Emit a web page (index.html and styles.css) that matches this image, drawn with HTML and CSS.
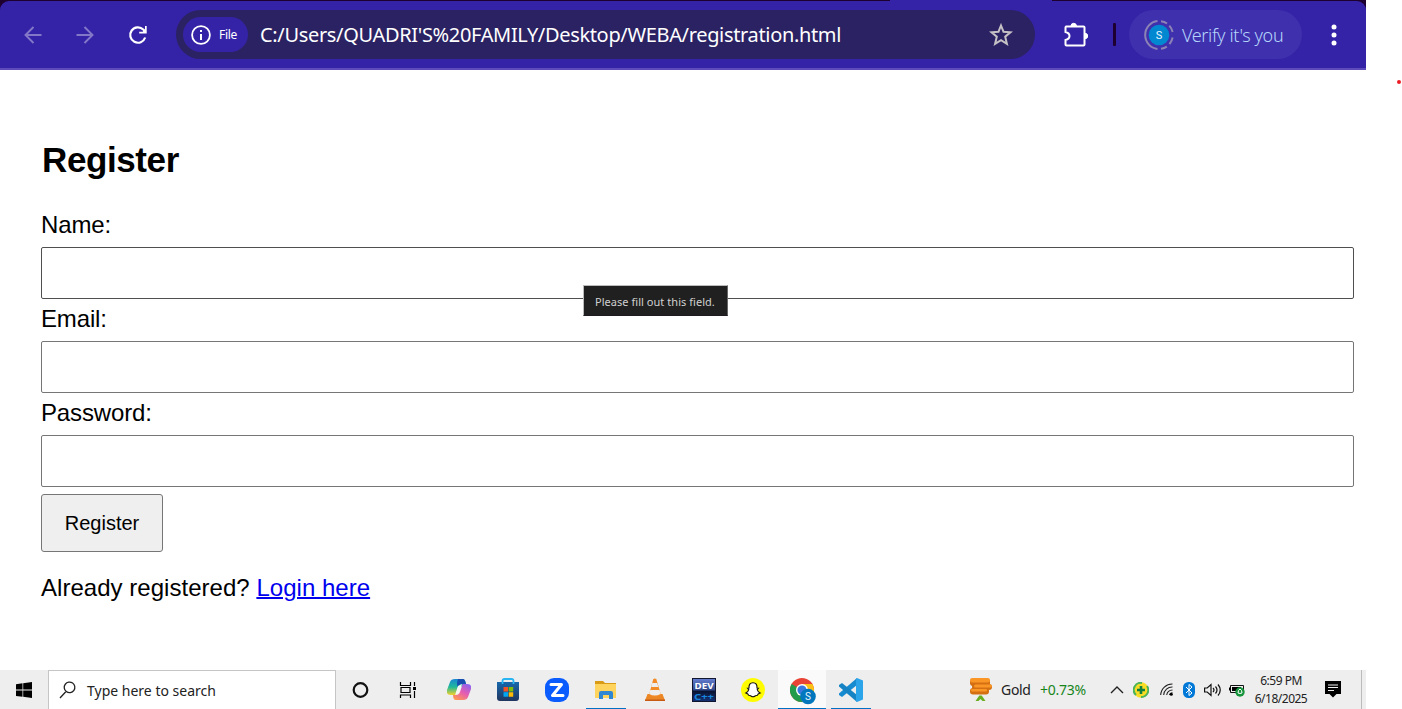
FILE: index.html
```html
<!DOCTYPE html>
<html lang="en">
<head>
<meta charset="utf-8">
<title>Register</title>
<link rel="stylesheet" href="styles.css">
</head>
<body>
<div class="screen">
  <header class="browser">
    <div class="toolbar">
      <svg class="nav back" width="18" height="18" viewBox="0 0 18 18"><path d="M17.5 9H1.5M9.5 1L1.5 9l8 8"/></svg>
      <svg class="nav forward" width="18" height="18" viewBox="0 0 18 18"><path d="M.5 9h16M8.500 1l8 8-8 8"/></svg>
      <svg class="reload" width="20" height="20" viewBox="0 0 20 20"><path d="M17.200 12.500A7.700 7.700 0 1 1 15.300 4.500L17.500 7" fill="none" stroke="#fff" stroke-width="2.200"/><path d="M18.700 1v7.500h-7.500v-1.800h3.500L17 4V1z" fill="#fff"/></svg>
      <div class="address">
        <div class="chip">
          <svg width="20" height="20" viewBox="0 0 20 20"><circle cx="10" cy="10" r="8.900" fill="none" stroke="#fff" stroke-width="1.800"/><path d="M10 9v6M10 5v2" stroke="#fff" stroke-width="2"/></svg>
          <span class="chip-text">File</span>
        </div>
        <span class="url">C:/Users/QUADRI'S%20FAMILY/Desktop/WEBA/registration.html</span>
        <svg class="star" width="24" height="24" viewBox="0 0 24 24"><path d="M12 2.500l2.500 6.200 7 .5-5.300 4.500 1.700 7.100-5.900-3.700-5.900 3.700 1.700-7.100-5.300-4.500 7-.5z" fill="none" stroke="#c5c1c5" stroke-width="2"/></svg>
      </div>
      <svg class="puzzle" width="26" height="26" viewBox="0 0 26 26"><path d="M3.500 4.500h18q1 0 1 1v17q0 1-1 1h-17q-1 0-1-1v-4.500q4-1 4-4t-4-4V5.500q0-1 1-1z" fill="none" stroke="#fff" stroke-width="2"/><path d="M9 4a2.700 2.700 0 0 1 5.400 0zM23 11.300a2.700 2.700 0 0 1 0 5.400z" fill="#fff" stroke="#fff"/></svg>
      <span class="divider"></span>
      <div class="profile">
        <svg width="30" height="30" viewBox="0 0 30 30"><g fill="none" stroke="#8b83b6" stroke-width="2"><path d="M13.500 1.100A14 14 0 0 0 13.500 28.900M17 1.200Q20.500 1.500 23 3.500M25.300 5.600Q28 8.500 28.600 12M28.600 17.500Q28 21 25.500 24.200M22.800 26.600Q20.500 28.300 17 28.800"/></g><circle cx="15" cy="15" r="10.300" fill="#0288d1"/><text x="15" y="18.800" text-anchor="middle" class="avatar">S</text></svg>
        <span class="verify">Verify it's you</span>
      </div>
      <svg class="dots" width="6" height="22" viewBox="0 0 6 22"><g fill="#fff"><circle cx="3" cy="3" r="2.500"/><circle cx="3" cy="11" r="2.500"/><circle cx="3" cy="19" r="2.500"/></g></svg>
    </div>
    <span class="tab-foot"></span>
  </header>

  <main class="page">
    <h2 class="title">Register</h2>
    <form class="form">
      <label class="label" for="name">Name:</label>
      <input class="field active" id="name" type="text">
      <label class="label" for="email">Email:</label>
      <input class="field" id="email" type="email">
      <label class="label" for="password">Password:</label>
      <input class="field" id="password" type="password">
      <button class="submit" type="button"><span class="submit-text">Register</span></button>
    </form>
    <p class="login">Already registered? <a class="link" href="#">Login here</a></p>
    <div class="tooltip"><span class="tooltip-text">Please fill out this field.</span></div>
  </main>

  <footer class="taskbar">
    <div class="start"><svg width="16" height="16" viewBox="0 0 16 16"><path d="M0 2.200l6.500-.9v6.300H0zM7.200 1.200L16 0v7.600H7.200zM0 8.500h6.500v6.300L0 14zM7.200 8.500H16V16l-8.800-1.200z"/></svg></div>
    <div class="search">
      <svg width="18" height="18" viewBox="0 0 18 18"><path d="M1 17l6-6.500M7.300 10.600a5.300 5.300 0 1 1 7.600-1.200 5.300 5.300 0 0 1-7.600 1.200z" fill="none" stroke="#222" stroke-width="1.300"/></svg>
      <span class="search-text">Type here to search</span>
    </div>
    <div class="apps">
      <div class="app"><svg width="18" height="18" viewBox="0 0 18 18"><circle cx="8.500" cy="9" r="6.800" fill="none" stroke="#111" stroke-width="2.200"/></svg></div>
      <div class="app"><svg class="taskview" width="18" height="16" viewBox="0 0 18 16"><path d="M1.500 0v3.500h10V0M1.500 16v-3h10v3M2 5.500h9v5H2zM15.500 0v4M15.500 9v7" fill="none" stroke="#000" stroke-width="1.200"/><path d="M14 5h3v3h-3z"/></svg></div>
      <div class="app"><svg width="24" height="24" viewBox="0 0 24 24">
        <defs><linearGradient id="coolCo" x2="0" y2="1"><stop stop-color="#1987d3"/><stop offset=".5" stop-color="#21b999"/><stop offset="1" stop-color="#f3d22b"/></linearGradient><linearGradient id="warmCo" x1=".8" x2=".2" y2="1"><stop stop-color="#8d63ed"/><stop offset=".5" stop-color="#e65cb1"/><stop offset="1" stop-color="#ff9950"/></linearGradient></defs>
        <path d="M8 1h8q2 0 3 5l-2 2-6 1-2 8H4q-5 0-4-5L3 4q1-3 5-3z" fill="url(#coolCo)"/><path d="M11 1h5q2 0 3 5h-4q-3 0-4 3-2-2 0-8z" fill="#174eaf"/><path d="M16 6h4q5 0 4 5l-3 8q-1 3-5 3H9q-3 0-3-5h3q3 0 4-3l2-6q0-2 1-2z" fill="url(#warmCo)"/><path d="M11 8l4-2-3 9-4 2z" fill="#f8f7f4"/></svg></div>
      <div class="app"><svg width="24" height="24" viewBox="0 0 24 24"><defs><linearGradient id="shop" x2="0" y2="1"><stop stop-color="#1668ad"/><stop offset="1" stop-color="#20365f"/></linearGradient></defs><path d="M1 4h22v16q0 3-3 3H4q-3 0-3-3z" fill="url(#shop)"/><path d="M6.500 6V3q0-2 2-2h7q2 0 2 2v3" fill="none" stroke="#29b5f1" stroke-width="1.800"/><path d="M7.500 9H12v4.500H7.500z" fill="#f35325"/><path d="M12.700 9h4.500v4.500h-4.500z" fill="#81bc06"/><path d="M7.500 14.200H12v4.500H7.500z" fill="#05a6f0"/><path d="M12.700 14.200h4.500v4.500h-4.500z" fill="#ffba08"/></svg></div>
      <div class="app"><svg width="24" height="24" viewBox="0 0 24 24"><rect width="24" height="24" rx="9" fill="#0b5cff"/><path d="M6 6.500h10.500L7.500 17.500H18" fill="none" stroke="#fff" stroke-width="3" stroke-linecap="round" stroke-linejoin="round"/></svg></div>
      <div class="app running"><svg width="22" height="20" viewBox="0 0 22 20"><path d="M0 1h8l2 2h11v6H0z" fill="#d99b16"/><path d="M0 4h21v14H0z" fill="#ffd45e"/><path d="M4 19v-6q0-2 2-2h10q2 0 2 2v6h-4v-4H8v4z" fill="#2f86d2"/></svg></div>
      <div class="app"><svg width="22" height="24" viewBox="0 0 22 24"><path d="M3.500 16h15l2.500 6.500H1z" fill="#ec8725"/><path d="M9.300 1q1.700-1 3 0l4.700 16q-6 4-12 0z" fill="#f28a25"/><path d="M8.300 5h4.900l1.100 4H7.200zM6.300 12h9.200l1.200 4q-6 3-11.500 0z" fill="#eee"/><path d="M1 21.500h20v1.500H1z" fill="#c85b14"/></svg></div>
      <div class="app"><svg width="24" height="24" viewBox="0 0 24 24"><defs><linearGradient id="dev" x2="0" y2="1"><stop stop-color="#657ed0"/><stop offset=".5" stop-color="#31498a"/><stop offset=".55" stop-color="#091331"/><stop offset="1" stop-color="#153376"/></linearGradient></defs><rect x=".5" y=".5" width="23" height="23" fill="url(#dev)" stroke="#111731"/><text x="12" y="11" text-anchor="middle" class="dev-text" textLength="19" lengthAdjust="spacingAndGlyphs">DEV</text><text x="12" y="22" text-anchor="middle" class="cpp-text" textLength="20" lengthAdjust="spacingAndGlyphs">C++</text></svg></div>
      <div class="app"><svg width="24" height="24" viewBox="0 0 24 24"><circle cx="12" cy="12" r="12" fill="#fffc00"/><path d="M12 4.700c-3 0-4.200 2-4 5.300l-1.500.2 1.300 1.500c-.5 1.700-1.500 2.500-3 3.200l2 1 .8 1.300c2-.2 2.500 1.500 4.400 1.500s2.400-1.700 4.400-1.500l.8-1.300 2-1c-1.500-.7-2.500-1.500-3-3.200l1.300-1.500L16 10c.2-3.300-1-5.300-4-5.300z" fill="#fff" stroke="#111" stroke-width="1.100"/></svg></div>
      <div class="app current"><svg class="chrome" width="26" height="27" viewBox="0 0 26 27"><circle cx="12" cy="12" r="12" fill="#e94335"/><path d="M12 12L1.600 6A12 12 0 0 0 12 24l6-10z" fill="#249b4a"/><path d="M12 6h10.400A12 12 0 0 1 12 24l5-9z" fill="#fbc116"/><circle cx="12" cy="12" r="6" fill="#fff"/><circle cx="12" cy="12" r="4.600" fill="#3979df"/><circle cx="18" cy="18.500" r="7.800" fill="#0277bd"/><text x="18" y="22" text-anchor="middle" class="mini-avatar">S</text></svg></div>
      <div class="app running"><svg width="24" height="24" viewBox="0 0 24 24"><path d="M18 0v7L3 19l-3-2V15.500z" fill="#168bd0"/><path d="M3 5L0 7v1.500L18 24v-7z" fill="#1683c5"/><path d="M18 0l6 2.500v19L18 24l-1-1V1z" fill="#2ca4ea"/></svg></div>
    </div>
    <div class="tray">
      <svg class="gold" width="24" height="24" viewBox="0 0 24 24"><g fill="#d46f12"><rect x="1" y="1" width="20" height="7" rx="3"/><rect x="3" y="6" width="20" height="6" rx="3"/><rect x="1" y="10" width="19" height="6.500" rx="3"/></g><g fill="#fa9626"><rect x="1" y="0" width="20" height="4.500" rx="2.200"/><rect x="5" y="6.500" width="18" height="3" rx="1.500"/><rect x="2" y="11" width="16" height="2.500" rx="1.200"/></g><path d="M6.500 23l3.800-5.500h2.400l3.800 5.500h-3l-2-2-2 2z" fill="#69ad20"/></svg>
      <span class="gold-text">Gold</span>
      <span class="change">+0.73%</span>
      <svg class="chevron" width="14" height="8" viewBox="0 0 14 8"><path d="M1 7l6-6 6 6" fill="none" stroke="#222" stroke-width="1.400"/></svg>
      <svg class="update" width="16" height="16" viewBox="0 0 16 16"><circle cx="8" cy="8" r="7.700" fill="#f9dc24"/><path d="M3 13A7 7 0 0 1 9 1M14 4a7 7 0 0 1-6 11" fill="none" stroke="#4bb45b" stroke-width="2"/><path d="M8 4v8M4 8h8" stroke="#12803d" stroke-width="2.600"/></svg>
      <svg class="wifi" width="13" height="13" viewBox="0 0 13 13"><g fill="none" stroke="#222" stroke-width="1.100"><path d="M.7 12A11.500 11.500 0 0 1 12.500 1M3.700 12A8.500 8.500 0 0 1 12.500 4M6.700 12a6 6 0 0 1 5.800-5M9.500 12a3 3 0 0 1 3-2.300"/></g><circle cx="11.300" cy="11.300" r="1.500"/></svg>
      <svg class="bluetooth" width="12" height="16" viewBox="0 0 12 16"><rect width="12" height="16" rx="5.500" fill="#0078d7"/><path d="M3 5l6 6-3 2.500v-11L9 5l-6 6" fill="none" stroke="#fff"/></svg>
      <svg class="volume" width="18" height="14" viewBox="0 0 18 14"><path d="M.6 5h2.600L7 1.500v11L3.200 9H.6zM9 5q2 2 0 4M11.500 3.500q3 3.500 0 7M14 1.500q4.500 5.500 0 11" fill="none" stroke="#111" stroke-width="1.200"/></svg>
      <svg class="battery" width="16" height="14" viewBox="0 0 16 14"><path d="M1.500 2.500h13v7h-13z" fill="none" stroke="#111"/><path d="M3 4h9v4H3zM0 4.500h1.500v3H0z"/><circle cx="11" cy="9" r="4.700" fill="#16943c"/><path d="M9 10q0-3 2-4 2 1 2 4-2 1-4 0z" fill="none" stroke="#fff"/></svg>
      <div class="clock"><span class="time">6:59 PM</span><span class="date">6/18/2025</span></div>
      <svg class="notice" width="16" height="17" viewBox="0 0 16 17"><path d="M0 0h16v13h-4.500L8 16.500 4.500 13H0z"/><path d="M3 4h10M3 6.500h10M3 9.500h6" stroke="#eee"/></svg>
    </div>
  </footer>
</div>
<span class="red-dot"></span>
</body>
</html>
```
FILE: styles.css
```css
* { box-sizing: border-box; }
body { margin: 0; background: #fff; overflow: hidden; position: relative; height: 709px; }
svg { display: block; flex: none; }
span { white-space: nowrap; }
.screen { width: 1366px; height: 709px; display: flex; flex-direction: column; }

.browser { position: relative; height: 70px; padding-top: 1px; background: #1d0030; font-family: "Noto Sans", sans-serif; }
.toolbar { height: 69px; display: flex; align-items: center; background: #3523a7; border-bottom: 2px solid #5d4cba; border-radius: 9px 9px 0 0; padding-left: 24px; }
.tab-foot { position: absolute; left: 890px; top: 0; width: 162px; height: 1px; background: #3523a7; }
.nav { fill: none; stroke: #8378c8; stroke-width: 1.900; }
.forward { margin-left: 34px; }
.reload { margin-left: 34px; }
.address { display: flex; align-items: center; width: 859px; height: 49px; margin-left: 28px; padding-left: 7px; border-radius: 25px; background: #2b2263; }
.chip { width: 65px; height: 35px; display: flex; align-items: center; padding-left: 8px; border-radius: 18px; background: #3523a7; color: #fff; }
.chip-text { margin-left: 8px; font-size: 12px; letter-spacing: -0.3px; }
.url { width: 582px; margin-left: 12px; color: #fff; font-size: 20px; letter-spacing: -0.34px; }
.star { margin-left: 147px; }
.puzzle { margin-left: 27px; }
.divider { width: 3px; height: 23px; margin-left: 25px; border-radius: 1px; background: #1d0030; }
.profile { display: flex; align-items: center; width: 173px; height: 49px; margin-left: 13px; padding-left: 15px; border-radius: 25px; background: #3f30ad; }
.avatar { fill: #e8f6ff; font: 11px Roboto, sans-serif; }
.verify { margin-left: 8px; font-size: 18px; letter-spacing: -0.36px; color: #b5d4fa; font-weight: 300; }
.dots { margin-left: 29px; }

.page { position: relative; flex: 1; padding: 70px 12px 0 41px; color: #000; font-family: "Liberation Sans", Arial, sans-serif; font-size: 24px; }
.title { margin: 0 0 0 1px; font-size: 35px; line-height: 40px; letter-spacing: -0.4px; }
.form { display: flex; flex-direction: column; align-items: flex-start; padding-top: 25px; }
.label { height: 42px; line-height: 40px; letter-spacing: -0.15px; }
.field { width: 1313px; height: 52px; margin: 0; padding: 0 12px; border: 1px solid #767676; border-radius: 2px; background: #fff; outline: 0; }
.active { border-color: #4f4f4f; }
.submit { width: 122px; height: 58px; margin-top: 7px; padding: 0; border: 1px solid #767676; border-radius: 3px; background: #efefef; font: 20px "Liberation Sans", Arial, sans-serif; color: #000; }
.login { margin: 20px 0 0; line-height: 32px; letter-spacing: 0.03px; }
.link { color: #00e; text-decoration-thickness: 2px; }
.tooltip { position: absolute; left: 583px; top: 215px; width: 145px; height: 31px; padding-left: 11px; border: 1px solid #bcbcbc; border-right-color: #666; border-bottom-color: #211a22; background: #202020; color: #d0d0d0; font: 11px/31px "Noto Sans", sans-serif; letter-spacing: 0.04px; }

.taskbar { display: flex; height: 39px; background: #eee; font-family: "Noto Sans", sans-serif; color: #222; }
.start { width: 48px; display: flex; align-items: center; justify-content: center; }
.search { width: 288px; display: flex; align-items: center; padding-left: 10px; border: 1px solid #c5c5c5; border-bottom: 0; background: #fff; }
.search-text { margin-left: 10px; font-size: 14px; }
.apps { display: flex; width: 539px; }
.app { width: 49px; height: 39px; display: flex; align-items: center; justify-content: center; padding-top: 1px; }
.running { position: relative; }
.running::after { content: ""; position: absolute; left: 5px; bottom: 0; width: 40px; height: 1px; background: #0071c5; }
.current { width: 48px; margin-left: 1px; background: #fafafa; border-bottom: 1px solid #0071c5; }
.taskview { margin-right: 3px; }
.chrome { margin: 3px 0 0 2px; }
.dev-text { fill: #fff; font: bold 8px "Noto Sans", sans-serif; }
.cpp-text { fill: #1686dd; font: bold 8px "Noto Sans", sans-serif; }
.mini-avatar { fill: #e9f7ff; font: 10px Roboto, sans-serif; }
.tray { display: flex; flex: 1; align-items: center; margin-left: 94px; margin-right: 4px; border-right: 1px solid #bbb; }
.gold-text { width: 30px; margin-left: 8px; font-size: 14px; letter-spacing: -0.3px; }
.change { width: 47px; margin-left: 9px; color: #17851a; font-size: 14px; letter-spacing: -0.25px; }
.chevron { margin-left: 23px; }
.update { margin-left: 9px; }
.wifi { margin-left: 11px; }
.bluetooth { margin-left: 10px; }
.volume { margin-left: 9px; }
.battery { margin-left: 7px; }
.clock { width: 54px; margin-left: 9px; display: flex; flex-direction: column; align-items: center; font-size: 12px; line-height: 18px; letter-spacing: -0.5px; }
.notice { margin-left: 17px; }
.red-dot { position: absolute; left: 1397px; top: 80px; width: 4px; height: 4px; border-radius: 2px; background: #ed1c24; }
```
